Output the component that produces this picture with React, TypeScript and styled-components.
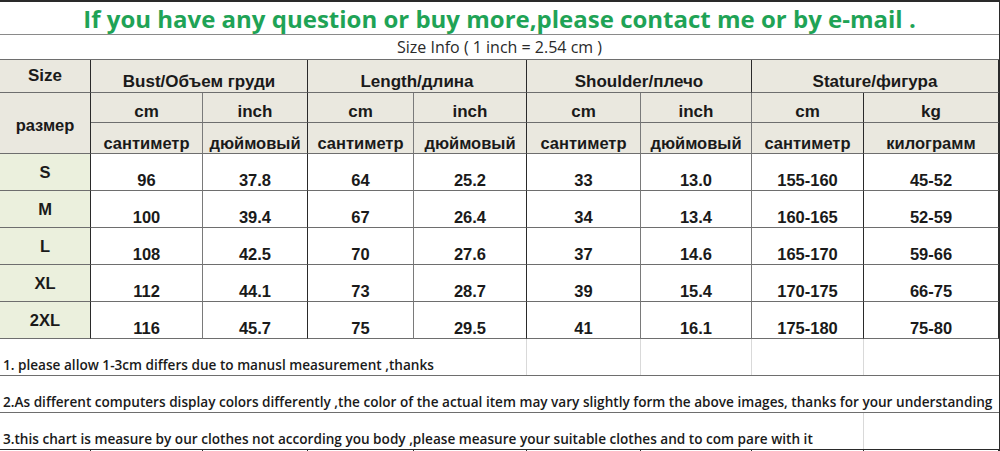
import React from "react";
import styled, { createGlobalStyle } from "styled-components";

const GlobalStyle = createGlobalStyle`
  html, body { margin: 0; padding: 0; background: #ffffff; }
  body { width: 1000px; height: 451px; overflow: hidden; }
`;

const COLS = [91, 112, 105, 106, 113, 114, 111, 112, 135];
const DARK = "#2a2a2a";
const MID = "#6e6e6e";
const HEADER_BG = "#eae8df";
const SIZE_BG = "#ebf0dd";

const Page = styled.div`
  width: 1000px;
  height: 451px;
  box-sizing: border-box;
  border-right: 1px solid ${DARK};
  background: #fff;
  display: flex;
  flex-direction: column;
`;

const Title = styled.div`
  height: 35px;
  box-sizing: border-box;
  border-top: 2px solid ${DARK};
  border-bottom: 1px solid #8a8a8a;
  display: flex;
  align-items: center;
  justify-content: center;
  font-family: "Open Sans", sans-serif;
  font-weight: 700;
  font-size: 24px;
  color: #1fa356;
  padding-left: 0px;
  white-space: nowrap;
`;

const SizeInfo = styled.div`
  height: 24px;
  display: flex;
  align-items: center;
  justify-content: center;
  font-family: "Open Sans", sans-serif;
  font-weight: 400;
  font-size: 16px;
  color: #2a2a2a;
  white-space: nowrap;
`;

const Grid = styled.div`
  display: grid;
  grid-template-columns: ${COLS.map((c) => c + "px").join(" ")};
  grid-template-rows: 33px 30px 31px repeat(5, 37px);
  border-top: 1px solid ${MID};
`;

type CellProps = {
  $bg?: string;
  $center?: boolean;
  $line?: "dark" | "mid";
  $size?: number;
  $top?: number;
};

const Cell = styled.div<CellProps>`
  box-sizing: border-box;
  border-bottom: 1px solid ${MID};
  border-right: 1px solid ${(p) => (p.$line === "mid" ? "#7a7a7a" : DARK)};
  background: ${(p) => p.$bg || "#fff"};
  display: flex;
  justify-content: center;
  align-items: ${(p) => (p.$center ? "center" : "flex-end")};
  padding-top: ${(p) => p.$top || 0}px;
  line-height: 1.15;
  font-family: "Liberation Sans", Arial, sans-serif;
  font-weight: 700;
  font-size: ${(p) => p.$size || 16.5}px;
  color: #1a1a1a;
  white-space: nowrap;
`;

const Notes = styled.div`
  display: flex;
  flex-direction: column;
`;

const NoteRow = styled.div<{ $dark?: boolean }>`
  height: 37px;
  box-sizing: border-box;
  border-bottom: 1px solid ${(p) => (p.$dark ? DARK : MID)};
  display: flex;
  align-items: stretch;
  background-image: linear-gradient(to right, transparent 526px, #d9d9d9 526px, #d9d9d9 527px, transparent 527px),
    linear-gradient(to right, transparent 640px, #d9d9d9 640px, #d9d9d9 641px, transparent 641px),
    linear-gradient(to right, transparent 751px, #d9d9d9 751px, #d9d9d9 752px, transparent 752px),
    linear-gradient(to right, transparent 863px, #d9d9d9 863px, #d9d9d9 864px, transparent 864px);
`;

const NoteText = styled.span<{ $w: number }>`
  width: ${(p) => p.$w}px;
  background: #fff;
  display: flex;
  align-items: flex-end;
  padding: 0 0 1px 3px;
  box-sizing: border-box;
  font-family: "Open Sans", sans-serif;
  font-weight: 600;
  font-size: 13.6px;
  line-height: 1.3;
  color: #1a1a1a;
  white-space: nowrap;
`;

const Ticks = styled.div`
  flex: 1;
  display: grid;
  grid-template-columns: ${COLS.map((c) => c + "px").join(" ")};
`;

const Tick = styled.div`
  border-right: 1px solid ${DARK};
`;

const sizes = ["S", "M", "L", "XL", "2XL"];
const data = [
  ["96", "37.8", "64", "25.2", "33", "13.0", "155-160", "45-52"],
  ["100", "39.4", "67", "26.4", "34", "13.4", "160-165", "52-59"],
  ["108", "42.5", "70", "27.6", "37", "14.6", "165-170", "59-66"],
  ["112", "44.1", "73", "28.7", "39", "15.4", "170-175", "66-75"],
  ["116", "45.7", "75", "29.5", "41", "16.1", "175-180", "75-80"],
];
const LINES: ("dark" | "mid")[] = ["mid", "dark", "mid", "dark", "mid", "mid", "dark", "dark"];

export default function App() {
  return (
    <>
      <GlobalStyle />
      <Page>
        <Title>If you have any question or buy more,please contact me or by e-mail .</Title>
        <SizeInfo>Size Info ( 1 inch = 2.54 cm )</SizeInfo>
        <Grid>
          <Cell $bg={HEADER_BG} $center $size={17}>
            Size
          </Cell>
          {["Bust/Объем груди", "Length/длина", "Shoulder/плечо", "Stature/фигура"].map((t) => (
            <Cell key={t} $bg={HEADER_BG} $size={17} style={{ gridColumn: "span 2" }}>
              {t}
            </Cell>
          ))}
          <Cell $bg={HEADER_BG} $center $top={5} style={{ gridRow: "span 2" }}>
            размер
          </Cell>
          {["cm", "inch", "cm", "inch", "cm", "inch", "cm", "kg"].map((t, i) => (
            <Cell key={"u" + i} $bg={HEADER_BG} $line={LINES[i]} $size={17}>
              {t}
            </Cell>
          ))}
          {["сантиметр", "дюймовый", "сантиметр", "дюймовый", "сантиметр", "дюймовый", "сантиметр", "килограмм"].map(
            (t, i) => (
              <Cell key={"r" + i} $bg={HEADER_BG} $line={LINES[i]}>
                {t}
              </Cell>
            )
          )}
          {sizes.map((s, r) => (
            <React.Fragment key={s}>
              <Cell $bg={SIZE_BG} $center>
                {s}
              </Cell>
              {data[r].map((v, i) => (
                <Cell key={i} $line={LINES[i]}>
                  {v}
                </Cell>
              ))}
            </React.Fragment>
          ))}
        </Grid>
        <Notes>
          <NoteRow>
            <NoteText $w={470}>1. please allow 1-3cm differs due to manusl measurement ,thanks</NoteText>
          </NoteRow>
          <NoteRow>
            <NoteText $w={999}>
              2.As different computers display colors differently ,the color of the actual item may vary slightly form the above images, thanks for your understanding
            </NoteText>
          </NoteRow>
          <NoteRow $dark>
            <NoteText $w={860}>
              3.this chart is measure by our clothes not according you body ,please measure your suitable clothes and to com pare with it
            </NoteText>
          </NoteRow>
        </Notes>
        <Ticks>
          {COLS.map((c, i) => (
            <Tick key={i} />
          ))}
        </Ticks>
      </Page>
    </>
  );
}
